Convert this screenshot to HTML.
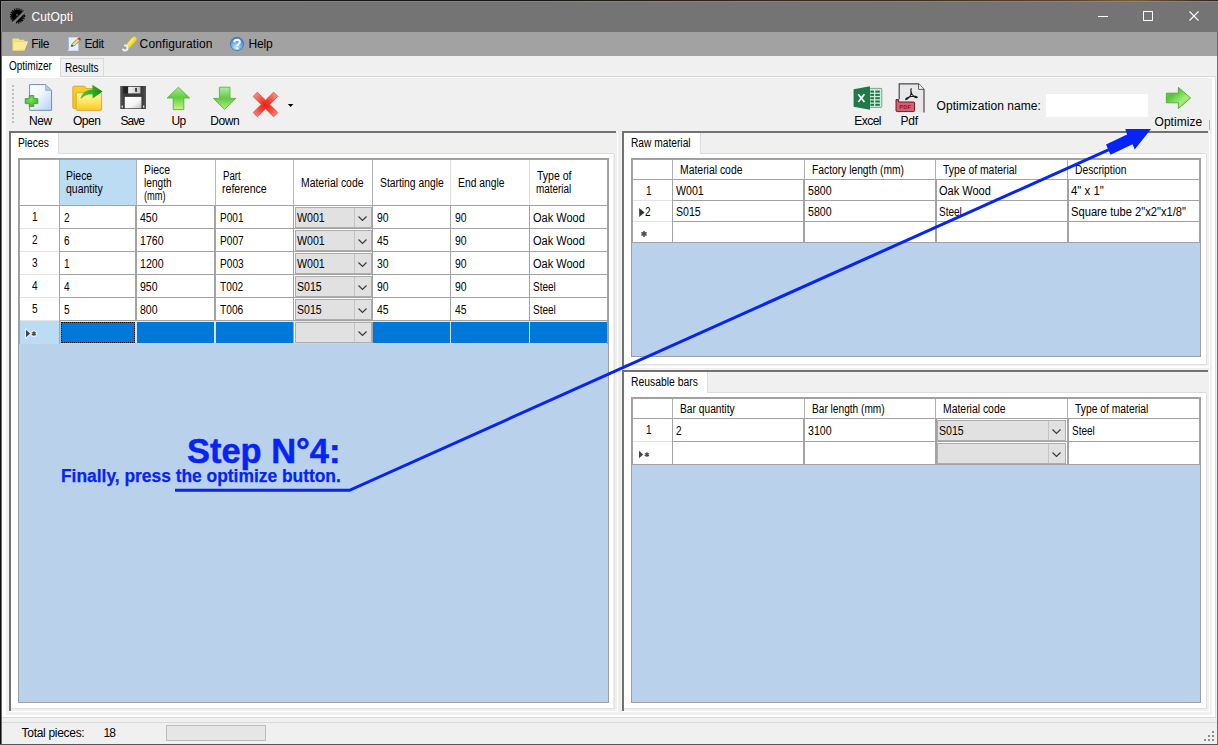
<!DOCTYPE html>
<html><head><meta charset="utf-8"><title>CutOpti</title><style>
html,body{margin:0;padding:0;}
body{width:1218px;height:745px;overflow:hidden;position:relative;background:#f0f0f0;font-family:"Liberation Sans",sans-serif;}
body div{position:absolute;}
.t{white-space:nowrap;color:#000;}
.g{font-size:12px;line-height:13px;}
.u{font-size:12px;line-height:14px;}
svg{position:absolute;overflow:visible;}
</style></head><body>
<div style="left:0px;top:0px;width:1218px;height:745px;background:#f0f0f0;"></div>
<div style="left:0px;top:0px;width:1218px;height:32px;background:#747474;"></div>
<div style="left:1px;top:1px;width:1217px;height:1px;background:#858585;"></div>
<div style="left:1px;top:1px;width:1px;height:31px;background:#858585;"></div>
<div style="left:0px;top:32px;width:1218px;height:24px;background:#a2a2a2;"></div>
<div style="left:0px;top:0px;width:1218px;height:1px;background:linear-gradient(90deg,#12110e 0%,#171511 45%,#2e2519 60%,#3c2e1e 75%,#5e4429 88%,#7a5a36 93%,#4a3a28 97%,#2a241c 100%);"></div>
<div style="left:0px;top:0px;width:1px;height:745px;background:#0c0c0c;"></div>
<div style="left:1px;top:32px;width:1px;height:713px;background:#6c6c6c;"></div>
<div style="left:1217px;top:32px;width:1px;height:713px;background:#6a6a6a;"></div>
<div style="left:0px;top:744px;width:1218px;height:1px;background:#555;"></div>
<div class="t u" style="left:31.5px;top:10px;letter-spacing:0.116px;color:#fff;">CutOpti</div>
<svg width="110" height="14" style="left:1095px;top:9px"><path d="M3 7.5H13" stroke="#fff" stroke-width="1" fill="none"/><rect x="48.5" y="2.5" width="9" height="9" stroke="#fff" stroke-width="1" fill="none"/><path d="M94.5 2.5L103.5 11.5M103.5 2.5L94.5 11.5" stroke="#fff" stroke-width="1.1" fill="none"/></svg>
<svg width="18" height="18" style="left:9px;top:7px" viewBox="0 0 18 18"><circle cx="8.5" cy="8.8" r="6.4" fill="#000"/><circle cx="8.5" cy="8.8" r="7" fill="none" stroke="#000" stroke-width="1.3" stroke-dasharray="1.25 1.0"/><path d="M3.4 15.2L14.9 3.9L16.4 5.5L5 16.9Z" fill="#7e7e7e"/><path d="M3 14.7L14.6 3.4" stroke="#2a2a2a" stroke-width="0.9"/><circle cx="8" cy="8" r="0.9" fill="#555"/></svg>
<div class="t u" style="left:31.2px;top:37px;letter-spacing:-0.336px;">File</div>
<div class="t u" style="left:84.4px;top:37px;letter-spacing:-0.322px;">Edit</div>
<div class="t u" style="left:139.6px;top:37px;letter-spacing:0.124px;">Configuration</div>
<div class="t u" style="left:248.6px;top:37px;letter-spacing:-0.172px;">Help</div>
<div style="left:2px;top:56px;width:58px;height:22px;background:#fff;"></div>
<div style="left:60px;top:58px;width:44px;height:19px;background:#f0f0f0;border:1px solid #d9d9d9;box-sizing:border-box;"></div>
<div style="left:60px;top:76px;width:1156px;height:1px;background:#d9d9d9;"></div>
<div style="left:2px;top:77px;width:1213px;height:1.3px;background:#fff;"></div>
<div style="left:2px;top:77px;width:4px;height:640px;background:#fff;"></div>
<div style="left:1212px;top:77px;width:3px;height:640px;background:#fff;"></div>
<div style="left:1215px;top:77px;width:1px;height:641px;background:#dcdcdc;"></div>
<div style="left:2px;top:715px;width:1213px;height:2px;background:#fff;"></div>
<div style="left:2px;top:717px;width:1214px;height:1px;background:#d9d9d9;"></div>
<div style="left:2px;top:722px;width:1215px;height:1px;background:#d9d9d9;"></div>
<div class="t g" style="left:9.1px;top:60px;transform:scaleX(0.8336);transform-origin:0 0;">Optimizer</div>
<div class="t g" style="left:64.7px;top:62px;transform:scaleX(0.8372);transform-origin:0 0;">Results</div>
<div style="left:12px;top:85px;width:2px;height:2px;background:#bdbdbd;"></div>
<div style="left:12px;top:89px;width:2px;height:2px;background:#bdbdbd;"></div>
<div style="left:12px;top:93px;width:2px;height:2px;background:#bdbdbd;"></div>
<div style="left:12px;top:97px;width:2px;height:2px;background:#bdbdbd;"></div>
<div style="left:12px;top:101px;width:2px;height:2px;background:#bdbdbd;"></div>
<div style="left:12px;top:105px;width:2px;height:2px;background:#bdbdbd;"></div>
<div style="left:12px;top:109px;width:2px;height:2px;background:#bdbdbd;"></div>
<div style="left:12px;top:113px;width:2px;height:2px;background:#bdbdbd;"></div>
<div style="left:12px;top:117px;width:2px;height:2px;background:#bdbdbd;"></div>
<div style="left:12px;top:121px;width:2px;height:2px;background:#bdbdbd;"></div>
<div class="t u" style="left:28.9px;top:114px;letter-spacing:-0.339px;">New</div>
<div class="t u" style="left:72.9px;top:114px;letter-spacing:-0.440px;">Open</div>
<div class="t u" style="left:120.5px;top:114px;letter-spacing:-1.015px;">Save</div>
<div class="t u" style="left:171.4px;top:114px;letter-spacing:-0.672px;">Up</div>
<div class="t u" style="left:210.2px;top:114px;letter-spacing:-0.372px;">Down</div>
<div class="t u" style="left:854.2px;top:114px;letter-spacing:-0.509px;">Excel</div>
<div class="t u" style="left:900.5px;top:114px;letter-spacing:-0.272px;">Pdf</div>
<div class="t u" style="left:936.6px;top:99px;letter-spacing:0.056px;">Optimization name:</div>
<div class="t u" style="left:1154.5px;top:115px;letter-spacing:0.045px;">Optimize</div>
<div style="left:1046px;top:94px;width:102px;height:23px;background:#fff;"></div>
<div style="left:1209px;top:120px;width:1px;height:10px;background:#b4b4b4;"></div>
<svg width="1218" height="130" style="left:0;top:0" viewBox="0 0 1218 130">
<defs>
<linearGradient id="gPage" x1="0" y1="0" x2="1" y2="1"><stop offset="0" stop-color="#ffffff"/><stop offset="0.45" stop-color="#eef5fd"/><stop offset="1" stop-color="#b4d0f2"/></linearGradient>
<radialGradient id="gPlus" cx="0.45" cy="0.4" r="0.7"><stop offset="0" stop-color="#7ee05a"/><stop offset="1" stop-color="#3aa826"/></radialGradient>
<linearGradient id="gFoldB" x1="0" y1="0" x2="0" y2="1"><stop offset="0" stop-color="#f9cf2c"/><stop offset="1" stop-color="#f6c21c"/></linearGradient>
<linearGradient id="gFoldF" x1="0" y1="0" x2="0" y2="1"><stop offset="0" stop-color="#fff6a8"/><stop offset="0.55" stop-color="#fde45c"/><stop offset="1" stop-color="#fbc926"/></linearGradient>
<linearGradient id="gGArr" x1="0" y1="0" x2="1" y2="0"><stop offset="0" stop-color="#55c838"/><stop offset="0.6" stop-color="#2fa81e"/><stop offset="1" stop-color="#178610"/></linearGradient>
<linearGradient id="gDisk" x1="0" y1="0" x2="1" y2="0"><stop offset="0" stop-color="#5a5a5a"/><stop offset="0.15" stop-color="#3c3c3c"/><stop offset="0.85" stop-color="#3a3a3a"/><stop offset="1" stop-color="#555"/></linearGradient>
<linearGradient id="gLabel" x1="0" y1="0" x2="1" y2="1"><stop offset="0" stop-color="#ffffff"/><stop offset="0.6" stop-color="#f4f4f4"/><stop offset="1" stop-color="#bdbdbd"/></linearGradient>
<linearGradient id="gShut" x1="0" y1="0" x2="1" y2="0"><stop offset="0" stop-color="#f4f4f4"/><stop offset="1" stop-color="#c4c4c4"/></linearGradient>
<linearGradient id="gUp" x1="0" y1="0" x2="0" y2="1"><stop offset="0" stop-color="#a4ec8c"/><stop offset="0.45" stop-color="#62cc42"/><stop offset="1" stop-color="#c6f77c"/></linearGradient>
<linearGradient id="gDn" x1="0" y1="0" x2="0" y2="1"><stop offset="0" stop-color="#b0eea0"/><stop offset="0.5" stop-color="#62c848"/><stop offset="1" stop-color="#b4f070"/></linearGradient>
<linearGradient id="gRt" x1="0" y1="0" x2="1" y2="1"><stop offset="0" stop-color="#6ed24e"/><stop offset="0.3" stop-color="#56c63a"/><stop offset="0.65" stop-color="#a8ec78"/><stop offset="1" stop-color="#6ccc48"/></linearGradient>
<radialGradient id="gX" cx="0.5" cy="0.55" r="0.6"><stop offset="0" stop-color="#ec1a10"/><stop offset="0.45" stop-color="#f2463a"/><stop offset="1" stop-color="#f98a7c"/></radialGradient>
<radialGradient id="gHelp" cx="0.45" cy="0.75" r="0.8"><stop offset="0" stop-color="#c8ecff"/><stop offset="0.5" stop-color="#6aa8e6"/><stop offset="1" stop-color="#2f6cc4"/></radialGradient>
</defs>

<!-- menu: folder -->
<g>
<path d="M12.6 38.6H18.5L19.6 39.8H24.4V41.2H27.9L24.4 50.3L12.9 51Z" fill="#f4e27e"/>
<path d="M14.7 41.4H28L24.3 50.4L12.9 50.9Z" fill="#f8ec9c"/>
<path d="M13 50.6L24.3 50.1" stroke="#e6cd5a" stroke-width="0.9" fill="none"/><path d="M14.9 41.6H27.6" stroke="#e9d46a" stroke-width="0.8" fill="none"/><path d="M12.8 38.8V50.6" stroke="#ecd870" stroke-width="0.7" fill="none"/>
</g>
<!-- menu: edit -->
<g>
<rect x="67.6" y="37.4" width="11" height="13.4" fill="#e9f1fc"/>
<rect x="67.4" y="37.4" width="1.2" height="13.4" fill="#6f96c8"/>
<path d="M67.6 50.4H78.6" stroke="#c9dbf3" stroke-width="0.9"/>
<path d="M78.6 37.4V50.8" stroke="#9db5d6" stroke-width="0.8" opacity="0.7"/>
<path d="M71.2 46.6L72 43.8L78.2 38.4L80.2 40.4L74 46Z" fill="#f2dc82" stroke="#6b5a3a" stroke-width="0.6"/>
<path d="M71.2 46.6L72 44.6L73.4 46Z" fill="#3a3a3a"/>
<path d="M77.6 38.8L79 37.4L81 39.2L79.8 40.6Z" fill="#c4283a"/>
</g>
<!-- menu: wrench/screwdriver -->
<g>
<path d="M128.6 45.4L134.2 39" stroke="#e9cb1c" stroke-width="5" stroke-linecap="round" fill="none"/>
<path d="M128.6 45.4L134.2 39" stroke="#f3dc2e" stroke-width="4" stroke-linecap="round" fill="none"/>
<path d="M128.6 44L133.2 38.8" stroke="#fbf07c" stroke-width="1.3" stroke-linecap="round" fill="none"/>
<path d="M124.15 45.65A2.5 2.5 0 1 1 122.65 48.86" fill="none" stroke="#f4f4f4" stroke-width="1.8"/>
<path d="M126.6 46.4L128 45" stroke="#f0f0f0" stroke-width="1.6"/>
</g>
<!-- menu: help -->
<g>
<circle cx="237" cy="43.9" r="6.7" fill="url(#gHelp)" stroke="#3f78c8" stroke-width="0.9"/>
<path d="M234.3 42.2Q234.4 39.8 237 39.8Q239.8 39.9 239.8 42Q239.8 43.3 238.4 44.2Q237.3 44.9 237.3 46" fill="none" stroke="#fff" stroke-width="1.9"/>
<circle cx="237.2" cy="48.3" r="1.1" fill="#fff"/>
</g>

<!-- New -->
<g>
<path d="M29.6 84.6H45.6L51.6 90.4V110.3H29.6Z" fill="url(#gPage)" stroke="#6f8db3" stroke-width="1"/>
<path d="M45.6 84.6V90.4H51.6Z" fill="#a9c8ee" stroke="#86a6d0" stroke-width="0.7"/>
<path d="M29.2 95.4H33.8V98.6H37.8V103.6H33.8V106.6H29.2V103.6H25.2V98.6H29.2Z" fill="url(#gPlus)" stroke="#3f9c2a" stroke-width="0.8" stroke-linejoin="round"/>
</g>
<!-- Open -->
<g>
<path d="M72.8 87.4Q72.8 86.2 74 86.2H84Q85.2 86.2 85.6 87.4L86 88.6H98V107.4L76 108.6H74Q72.8 108.6 72.8 107.4Z" fill="url(#gFoldB)" stroke="#cf9c1e" stroke-width="0.8"/>
<path d="M76.2 94Q76.2 92.8 77.4 92.8H100.4Q101.6 92.8 101.6 94V109Q101.6 110.4 100.2 110.4H77.8Q76.2 110.4 76.2 109Z" fill="url(#gFoldF)" stroke="#d9a422" stroke-width="0.9"/>
<path d="M80.4 98.6Q82.6 89.8 92.4 89.4V84.8L102.6 91.4L92.6 98.6V94.4Q85.4 94 81.6 98.6Z" fill="url(#gGArr)"/>
</g>
<!-- Save -->
<g>
<rect x="120.2" y="86" width="25.8" height="23" fill="url(#gDisk)"/>
<rect x="123.3" y="86.8" width="4.9" height="6.6" fill="#232323"/>
<rect x="128.2" y="86.8" width="12.2" height="6.6" fill="url(#gShut)"/>
<rect x="135.1" y="88" width="1.9" height="3.8" fill="#3a3a3a"/>
<rect x="124.8" y="96.9" width="16.6" height="11.4" fill="url(#gLabel)"/>
<rect x="121.6" y="105.6" width="1.3" height="2" fill="#e8e8e8"/><rect x="143" y="105.6" width="1.3" height="2" fill="#e8e8e8"/>
</g>
<!-- Up -->
<path d="M178.4 87.2L189.6 98H183.8V109.6H173.2V98H167.2Z" fill="url(#gUp)" stroke="#55b436" stroke-width="0.9" stroke-linejoin="round"/>
<!-- Down -->
<path d="M219.4 87.2H230V98.4H235.8L224.6 109.4L213.4 98.4H219.4Z" fill="url(#gDn)" stroke="#5cb440" stroke-width="0.9" stroke-linejoin="round"/>
<!-- Delete X -->
<path d="M257.4 92.2L265.5 100.2L273.6 92.2L277.8 96.4L269.8 104.5L277.8 112.6L273.6 116.8L265.5 108.8L257.4 116.8L253.2 112.6L261.2 104.5L253.2 96.4Z" fill="url(#gX)" stroke="#d4483a" stroke-width="0.8" stroke-linejoin="round"/>
<path d="M287.8 104H293.4L290.6 107Z" fill="#000"/>

<!-- Excel -->
<g>
<rect x="869.4" y="88.4" width="12.4" height="19" rx="0.8" fill="#cdeeda" stroke="#6e9c80" stroke-width="0.9"/>
<g fill="#1f7445">
<rect x="870.4" y="90.6" width="3.6" height="2"/><rect x="875.3" y="90.6" width="4.5" height="2"/>
<rect x="870.4" y="93.9" width="3.6" height="2"/><rect x="875.3" y="93.9" width="4.5" height="2"/>
<rect x="870.4" y="97.2" width="3.6" height="2"/><rect x="875.3" y="97.2" width="4.5" height="2"/>
<rect x="870.4" y="100.5" width="3.6" height="2"/><rect x="875.3" y="100.5" width="4.5" height="2"/>
<rect x="870.4" y="103.8" width="3.6" height="2"/><rect x="875.3" y="103.8" width="4.5" height="2"/>
</g>
<path d="M853.6 89.2L870 86.2V109.8L853.6 106.8Z" fill="#1f7a48"/>
<path d="M858.3 94.2L864.4 102M864.4 94.2L858.3 102" stroke="#fff" stroke-width="1.7" fill="none"/>
</g>
<!-- Pdf -->
<g>
<path d="M899.2 83.8H918.6L924 89.4V112.6H899.2Z" fill="#e9e7ea"/>
<path d="M899.2 99.2V83.8H918.6L924 89.4V112.6" fill="none" stroke="#4a4a4a" stroke-width="1.2"/>
<path d="M918.6 83.8V89.4H924" fill="#f4f4f4" stroke="#4a4a4a" stroke-width="0.9"/>
<path d="M911.4 88.4Q910.4 89.6 911 92Q911.6 94.6 909 97.4Q907.2 99.4 905.8 99.6Q905.4 98.2 908.4 97.2Q912 96 915.4 96.4Q917.6 96.8 917.2 97.6Q916 98 913.6 96.2Q911.2 94 911 91.4Q910.8 88.8 911.4 88.4Z" fill="none" stroke="#1a1a1a" stroke-width="1.1"/>
<path d="M896 99.6H898.6V102H913.6Q914.6 102 914.6 103V110.4Q914.6 111.6 913.4 111.6H897.2Q896 111.6 896 110.4Z" fill="#d9606e" stroke="#571018" stroke-width="0.9"/>
<text x="905.3" y="109.2" font-family="Liberation Sans, sans-serif" font-weight="bold" font-size="5.6" fill="#8a1626" text-anchor="middle" letter-spacing="0.3">PDF</text>
</g>
<!-- Optimize arrow -->
<path d="M1166.4 93.2H1178.4V87.4L1190.6 98L1178.4 108.6V102.8H1166.4Z" fill="url(#gRt)" stroke="#4ea634" stroke-width="0.9" stroke-linejoin="round"/>
</svg>

<div style="left:9.2px;top:131px;width:606.8px;height:2px;background:#727272;"></div>
<div style="left:9.2px;top:131px;width:2px;height:579.5px;background:#727272;"></div>
<div style="left:616.8px;top:131px;width:1.2px;height:581px;background:#fff;"></div>
<div style="left:9.2px;top:710.8px;width:608.8px;height:1.2px;background:#fff;"></div>
<div style="left:11.2px;top:133px;width:46.8px;height:22px;background:#fff;"></div>
<div style="left:58.0px;top:153px;width:555.5px;height:1px;background:#dcdcdc;"></div>
<div style="left:58.0px;top:133px;width:1px;height:21px;background:#dcdcdc;"></div>
<div style="left:11.2px;top:154px;width:602.3px;height:554px;background:#fff;"></div>
<div style="left:613.5px;top:154px;width:1px;height:555px;background:#e0e0e0;"></div>
<div style="left:11.2px;top:708px;width:603.3px;height:1px;background:#e0e0e0;"></div>
<div class="t g" style="left:18.1px;top:137px;transform:scaleX(0.8548);transform-origin:0 0;">Pieces</div>
<div style="left:622px;top:131px;width:586px;height:2px;background:#727272;"></div>
<div style="left:622px;top:131px;width:2px;height:235.1px;background:#727272;"></div>
<div style="left:1208.8px;top:131px;width:1.2px;height:236.6px;background:#fff;"></div>
<div style="left:622px;top:366.40000000000003px;width:588px;height:1.2px;background:#fff;"></div>
<div style="left:624px;top:133px;width:76.4px;height:22px;background:#fff;"></div>
<div style="left:700.4px;top:153px;width:505.1px;height:1px;background:#dcdcdc;"></div>
<div style="left:700.4px;top:133px;width:1px;height:21px;background:#dcdcdc;"></div>
<div style="left:624px;top:154px;width:581.5px;height:209.6px;background:#fff;"></div>
<div style="left:1205.5px;top:154px;width:1px;height:210.6px;background:#e0e0e0;"></div>
<div style="left:624px;top:363.6px;width:582.5px;height:1px;background:#e0e0e0;"></div>
<div class="t g" style="left:630.9px;top:137px;transform:scaleX(0.8510);transform-origin:0 0;">Raw material</div>
<div style="left:622px;top:370px;width:586px;height:2px;background:#727272;"></div>
<div style="left:622px;top:370px;width:2px;height:340.5px;background:#727272;"></div>
<div style="left:1208.8px;top:370px;width:1.2px;height:342px;background:#fff;"></div>
<div style="left:622px;top:710.8px;width:588px;height:1.2px;background:#fff;"></div>
<div style="left:624px;top:372px;width:83px;height:22px;background:#fff;"></div>
<div style="left:707px;top:392px;width:498.5px;height:1px;background:#dcdcdc;"></div>
<div style="left:707px;top:372px;width:1px;height:21px;background:#dcdcdc;"></div>
<div style="left:624px;top:393px;width:581.5px;height:315px;background:#fff;"></div>
<div style="left:1205.5px;top:393px;width:1px;height:316px;background:#e0e0e0;"></div>
<div style="left:624px;top:708px;width:582.5px;height:1px;background:#e0e0e0;"></div>
<div class="t g" style="left:630.9px;top:376px;transform:scaleX(0.8644);transform-origin:0 0;">Reusable bars</div>
<div style="left:18px;top:158px;width:591px;height:545px;background:#b9d1ea;"></div>
<div style="left:20px;top:160px;width:587px;height:184px;background:#fff;"></div>
<div style="left:59px;top:160px;width:1px;height:46px;background:#b0b0b0;"></div>
<div style="left:136px;top:160px;width:1px;height:46px;background:#b0b0b0;"></div>
<div style="left:215px;top:160px;width:1px;height:46px;background:#b8b8b8;"></div>
<div style="left:293px;top:160px;width:1px;height:46px;background:#b8b8b8;"></div>
<div style="left:372px;top:160px;width:1px;height:46px;background:#b0b0b0;"></div>
<div style="left:450px;top:160px;width:1px;height:46px;background:#dedede;"></div>
<div style="left:529px;top:160px;width:1px;height:46px;background:#dedede;"></div>
<div style="left:59px;top:206px;width:1px;height:138px;background:#a3a3a3;"></div>
<div style="left:135px;top:206px;width:2px;height:138px;background:#a3a3a3;"></div>
<div style="left:214px;top:206px;width:2px;height:138px;background:#a3a3a3;"></div>
<div style="left:293px;top:206px;width:1px;height:138px;background:#a3a3a3;"></div>
<div style="left:372px;top:206px;width:1px;height:138px;background:#a3a3a3;"></div>
<div style="left:450px;top:206px;width:1px;height:138px;background:#a3a3a3;"></div>
<div style="left:529px;top:206px;width:1px;height:138px;background:#a3a3a3;"></div>
<div style="left:59px;top:205px;width:548px;height:1px;background:#a3a3a3;"></div>
<div style="left:20px;top:205px;width:39px;height:1px;background:#a3a3a3;"></div>
<div style="left:59px;top:228px;width:548px;height:1px;background:#a3a3a3;"></div>
<div style="left:20px;top:228px;width:39px;height:1px;background:#e4e4e4;"></div>
<div style="left:59px;top:251px;width:548px;height:1px;background:#a3a3a3;"></div>
<div style="left:20px;top:251px;width:39px;height:1px;background:#e4e4e4;"></div>
<div style="left:59px;top:274px;width:548px;height:1px;background:#a3a3a3;"></div>
<div style="left:20px;top:274px;width:39px;height:1px;background:#e4e4e4;"></div>
<div style="left:59px;top:297px;width:548px;height:1px;background:#a3a3a3;"></div>
<div style="left:20px;top:297px;width:39px;height:1px;background:#e4e4e4;"></div>
<div style="left:59px;top:320px;width:548px;height:1px;background:#a3a3a3;"></div>
<div style="left:20px;top:320px;width:39px;height:1px;background:#e4e4e4;"></div>
<div style="left:59px;top:343px;width:548px;height:1px;background:#a3a3a3;"></div>
<div style="left:20px;top:343px;width:39px;height:1px;background:#a3a3a3;"></div>
<div style="left:18px;top:158px;width:591px;height:1px;background:#9c9fa3;"></div>
<div style="left:18px;top:158px;width:1px;height:545px;background:#9c9fa3;"></div>
<div style="left:608px;top:158px;width:1px;height:545px;background:#9c9fa3;"></div>
<div style="left:18px;top:702px;width:591px;height:1px;background:#9c9fa3;"></div>
<div style="left:19px;top:159px;width:589px;height:1px;background:#a3a3a3;"></div>
<div style="left:19px;top:159px;width:1px;height:185px;background:#a3a3a3;"></div>
<div style="left:607px;top:159px;width:1px;height:185px;background:#a3a3a3;"></div>
<div style="left:60px;top:160px;width:76px;height:45px;background:#bcdcf4;"></div>
<div style="left:60px;top:321px;width:75px;height:22px;background:#0078d7;"></div>
<div style="left:137px;top:321px;width:77px;height:22px;background:#0078d7;"></div>
<div style="left:216px;top:321px;width:77px;height:22px;background:#0078d7;"></div>
<div style="left:373px;top:321px;width:77px;height:22px;background:#0078d7;"></div>
<div style="left:451px;top:321px;width:78px;height:22px;background:#0078d7;"></div>
<div style="left:530px;top:321px;width:77px;height:22px;background:#0078d7;"></div>
<div style="left:135px;top:321px;width:2px;height:22px;background:#cfe3f4;"></div>
<div style="left:214px;top:321px;width:2px;height:22px;background:#cfe3f4;"></div>
<div style="left:450px;top:321px;width:1.4px;height:22px;background:#cfe3f4;"></div>
<div style="left:529px;top:321px;width:1.4px;height:22px;background:#cfe3f4;"></div>
<div style="left:60px;top:343px;width:547px;height:1px;background:#c3d5e8;"></div>
<div style="left:60px;top:321px;width:547px;height:1px;background:#dbe9f6;"></div>
<div style="left:60px;top:321px;width:1px;height:22px;background:#9fc6ea;"></div>
<div style="left:61px;top:322px;width:74px;height:21px;background:transparent;border:1px dotted #0a0a0a;box-sizing:border-box;"></div>
<div class="t g" style="left:66.4px;top:170px;transform:scaleX(0.8724);transform-origin:0 0;">Piece</div>
<div class="t g" style="left:65.9px;top:183px;transform:scaleX(0.8732);transform-origin:0 0;">quantity</div>
<div class="t g" style="left:143.5px;top:164px;transform:scaleX(0.8658);transform-origin:0 0;">Piece</div>
<div class="t g" style="left:143.5px;top:177px;transform:scaleX(0.8440);transform-origin:0 0;">length</div>
<div class="t g" style="left:143.5px;top:190px;transform:scaleX(0.7719);transform-origin:0 0;">(mm)</div>
<div class="t g" style="left:222.5px;top:170px;transform:scaleX(0.8040);transform-origin:0 0;">Part</div>
<div class="t g" style="left:221.7px;top:183px;transform:scaleX(0.8816);transform-origin:0 0;">reference</div>
<div class="t g" style="left:300.9px;top:177px;transform:scaleX(0.8675);transform-origin:0 0;">Material code</div>
<div class="t g" style="left:379.7px;top:177px;transform:scaleX(0.8601);transform-origin:0 0;">Starting angle</div>
<div class="t g" style="left:457.7px;top:177px;transform:scaleX(0.8604);transform-origin:0 0;">End angle</div>
<div class="t g" style="left:536.7px;top:170px;transform:scaleX(0.8765);transform-origin:0 0;">Type of</div>
<div class="t g" style="left:536.0px;top:183px;transform:scaleX(0.8246);transform-origin:0 0;">material</div>
<div class="t g" style="left:32.4px;top:211px;transform:scaleX(0.8374);transform-origin:0 0;">1</div>
<div class="t g" style="left:63.5px;top:212px;transform:scaleX(0.8374);transform-origin:0 0;">2</div>
<div class="t g" style="left:140.3px;top:212px;transform:scaleX(0.8786);transform-origin:0 0;">450</div>
<div class="t g" style="left:219.7px;top:212px;transform:scaleX(0.8384);transform-origin:0 0;">P001</div>
<div class="t g" style="left:376.8px;top:212px;transform:scaleX(0.8683);transform-origin:0 0;">90</div>
<div class="t g" style="left:454.7px;top:212px;transform:scaleX(0.8683);transform-origin:0 0;">90</div>
<div class="t g" style="left:533.0px;top:212px;transform:scaleX(0.9171);transform-origin:0 0;">Oak Wood</div>
<div style="left:295px;top:207px;width:77px;height:21px;background:#e1e1e1;border:1px solid #adadad;box-sizing:border-box;"></div>
<div style="left:354px;top:208px;width:1px;height:19px;background:#c4c4c4;"></div>
<svg width="10" height="6" style="left:358px;top:215.5px"><path d="M0.5 0.5L4.5 4.5L8.5 0.5" fill="none" stroke="#3a3a3a" stroke-width="1.2"/></svg>
<div class="t g" style="left:297.4px;top:212px;transform:scaleX(0.8865);transform-origin:0 0;">W001</div>
<div class="t g" style="left:32.4px;top:234px;transform:scaleX(0.8374);transform-origin:0 0;">2</div>
<div class="t g" style="left:63.5px;top:235px;transform:scaleX(0.8374);transform-origin:0 0;">6</div>
<div class="t g" style="left:140.3px;top:235px;transform:scaleX(0.8838);transform-origin:0 0;">1760</div>
<div class="t g" style="left:219.7px;top:235px;transform:scaleX(0.8455);transform-origin:0 0;">P007</div>
<div class="t g" style="left:376.8px;top:235px;transform:scaleX(0.8683);transform-origin:0 0;">45</div>
<div class="t g" style="left:454.7px;top:235px;transform:scaleX(0.8683);transform-origin:0 0;">90</div>
<div class="t g" style="left:533.0px;top:235px;transform:scaleX(0.9171);transform-origin:0 0;">Oak Wood</div>
<div style="left:295px;top:230px;width:77px;height:21px;background:#e1e1e1;border:1px solid #adadad;box-sizing:border-box;"></div>
<div style="left:354px;top:231px;width:1px;height:19px;background:#c4c4c4;"></div>
<svg width="10" height="6" style="left:358px;top:238.5px"><path d="M0.5 0.5L4.5 4.5L8.5 0.5" fill="none" stroke="#3a3a3a" stroke-width="1.2"/></svg>
<div class="t g" style="left:297.4px;top:235px;transform:scaleX(0.8865);transform-origin:0 0;">W001</div>
<div class="t g" style="left:32.4px;top:257px;transform:scaleX(0.8374);transform-origin:0 0;">3</div>
<div class="t g" style="left:63.5px;top:258px;transform:scaleX(0.8374);transform-origin:0 0;">1</div>
<div class="t g" style="left:140.3px;top:258px;transform:scaleX(0.8838);transform-origin:0 0;">1200</div>
<div class="t g" style="left:219.7px;top:258px;transform:scaleX(0.8455);transform-origin:0 0;">P003</div>
<div class="t g" style="left:376.8px;top:258px;transform:scaleX(0.8683);transform-origin:0 0;">30</div>
<div class="t g" style="left:454.7px;top:258px;transform:scaleX(0.8683);transform-origin:0 0;">90</div>
<div class="t g" style="left:533.0px;top:258px;transform:scaleX(0.9171);transform-origin:0 0;">Oak Wood</div>
<div style="left:295px;top:253px;width:77px;height:21px;background:#e1e1e1;border:1px solid #adadad;box-sizing:border-box;"></div>
<div style="left:354px;top:254px;width:1px;height:19px;background:#c4c4c4;"></div>
<svg width="10" height="6" style="left:358px;top:261.5px"><path d="M0.5 0.5L4.5 4.5L8.5 0.5" fill="none" stroke="#3a3a3a" stroke-width="1.2"/></svg>
<div class="t g" style="left:297.4px;top:258px;transform:scaleX(0.8865);transform-origin:0 0;">W001</div>
<div class="t g" style="left:32.4px;top:280px;transform:scaleX(0.8374);transform-origin:0 0;">4</div>
<div class="t g" style="left:63.5px;top:281px;transform:scaleX(0.8374);transform-origin:0 0;">4</div>
<div class="t g" style="left:140.3px;top:281px;transform:scaleX(0.8786);transform-origin:0 0;">950</div>
<div class="t g" style="left:219.7px;top:281px;transform:scaleX(0.8480);transform-origin:0 0;">T002</div>
<div class="t g" style="left:376.8px;top:281px;transform:scaleX(0.8683);transform-origin:0 0;">90</div>
<div class="t g" style="left:454.7px;top:281px;transform:scaleX(0.8683);transform-origin:0 0;">90</div>
<div class="t g" style="left:533.0px;top:281px;transform:scaleX(0.8334);transform-origin:0 0;">Steel</div>
<div style="left:295px;top:276px;width:77px;height:21px;background:#e1e1e1;border:1px solid #adadad;box-sizing:border-box;"></div>
<div style="left:354px;top:277px;width:1px;height:19px;background:#c4c4c4;"></div>
<svg width="10" height="6" style="left:358px;top:284.5px"><path d="M0.5 0.5L4.5 4.5L8.5 0.5" fill="none" stroke="#3a3a3a" stroke-width="1.2"/></svg>
<div class="t g" style="left:297.4px;top:281px;transform:scaleX(0.8812);transform-origin:0 0;">S015</div>
<div class="t g" style="left:32.4px;top:303px;transform:scaleX(0.8374);transform-origin:0 0;">5</div>
<div class="t g" style="left:63.5px;top:304px;transform:scaleX(0.8374);transform-origin:0 0;">5</div>
<div class="t g" style="left:140.3px;top:304px;transform:scaleX(0.8786);transform-origin:0 0;">800</div>
<div class="t g" style="left:219.7px;top:304px;transform:scaleX(0.8480);transform-origin:0 0;">T006</div>
<div class="t g" style="left:376.8px;top:304px;transform:scaleX(0.8683);transform-origin:0 0;">45</div>
<div class="t g" style="left:454.7px;top:304px;transform:scaleX(0.8683);transform-origin:0 0;">45</div>
<div class="t g" style="left:533.0px;top:304px;transform:scaleX(0.8334);transform-origin:0 0;">Steel</div>
<div style="left:295px;top:299px;width:77px;height:21px;background:#e1e1e1;border:1px solid #adadad;box-sizing:border-box;"></div>
<div style="left:354px;top:300px;width:1px;height:19px;background:#c4c4c4;"></div>
<svg width="10" height="6" style="left:358px;top:307.5px"><path d="M0.5 0.5L4.5 4.5L8.5 0.5" fill="none" stroke="#3a3a3a" stroke-width="1.2"/></svg>
<div class="t g" style="left:297.4px;top:304px;transform:scaleX(0.8812);transform-origin:0 0;">S015</div>
<div style="left:295px;top:322px;width:77px;height:21px;background:#e1e1e1;border:1px solid #adadad;box-sizing:border-box;"></div>
<div style="left:354px;top:323px;width:1px;height:19px;background:#c4c4c4;"></div>
<svg width="10" height="6" style="left:358px;top:330.5px"><path d="M0.5 0.5L4.5 4.5L8.5 0.5" fill="none" stroke="#3a3a3a" stroke-width="1.2"/></svg>
<div style="left:20px;top:321px;width:39px;height:23px;background:#bcdcf4;"></div>
<svg width="14" height="10" style="left:24.7px;top:328.8px"><path d="M1 0.6L5.4 4.5L1 8.4Z" fill="#fff" stroke="#fff" stroke-width="1.6" opacity="0.75"/><circle cx="8.9" cy="4.7" r="3.3" fill="#fff" opacity="0.7"/><path d="M1 0.8L5.2 4.5L1 8.2Z" fill="#444"/><path d="M8.9 2.3V7.1M6.8 3.5L11 5.9M11 3.5L6.8 5.9" stroke="#4a4a4a" stroke-width="1.3"/></svg>
<div style="left:631px;top:158px;width:570px;height:199px;background:#b9d1ea;"></div>
<div style="left:633px;top:160px;width:566px;height:83px;background:#fff;"></div>
<div style="left:672px;top:160px;width:1px;height:20px;background:#b0b0b0;"></div>
<div style="left:804px;top:160px;width:1px;height:20px;background:#b0b0b0;"></div>
<div style="left:935px;top:160px;width:1px;height:20px;background:#b0b0b0;"></div>
<div style="left:1067px;top:160px;width:1px;height:20px;background:#b0b0b0;"></div>
<div style="left:672px;top:180px;width:1px;height:63px;background:#a3a3a3;"></div>
<div style="left:803px;top:180px;width:2px;height:63px;background:#a3a3a3;"></div>
<div style="left:934.5px;top:180px;width:2px;height:63px;background:#a3a3a3;"></div>
<div style="left:1066.5px;top:180px;width:2px;height:63px;background:#a3a3a3;"></div>
<div style="left:672px;top:179px;width:527px;height:1px;background:#a3a3a3;"></div>
<div style="left:633px;top:179px;width:39px;height:1px;background:#a3a3a3;"></div>
<div style="left:672px;top:200px;width:527px;height:1px;background:#a3a3a3;"></div>
<div style="left:633px;top:200px;width:39px;height:1px;background:#e4e4e4;"></div>
<div style="left:672px;top:221px;width:527px;height:1px;background:#a3a3a3;"></div>
<div style="left:633px;top:221px;width:39px;height:1px;background:#e4e4e4;"></div>
<div style="left:672px;top:242px;width:527px;height:1px;background:#a3a3a3;"></div>
<div style="left:633px;top:242px;width:39px;height:1px;background:#a3a3a3;"></div>
<div style="left:631px;top:158px;width:570px;height:1px;background:#9c9fa3;"></div>
<div style="left:631px;top:158px;width:1px;height:199px;background:#9c9fa3;"></div>
<div style="left:1200px;top:158px;width:1px;height:199px;background:#9c9fa3;"></div>
<div style="left:631px;top:356px;width:570px;height:1px;background:#9c9fa3;"></div>
<div style="left:632px;top:159px;width:568px;height:1px;background:#a3a3a3;"></div>
<div style="left:632px;top:159px;width:1px;height:84px;background:#a3a3a3;"></div>
<div style="left:1199px;top:159px;width:1px;height:84px;background:#a3a3a3;"></div>
<div class="t g" style="left:679.8px;top:164px;transform:scaleX(0.8675);transform-origin:0 0;">Material code</div>
<div class="t g" style="left:811.5px;top:164px;transform:scaleX(0.8569);transform-origin:0 0;">Factory length (mm)</div>
<div class="t g" style="left:942.8px;top:164px;transform:scaleX(0.8656);transform-origin:0 0;">Type of material</div>
<div class="t g" style="left:1074.8px;top:164px;transform:scaleX(0.8562);transform-origin:0 0;">Description</div>
<div class="t g" style="left:646.2px;top:185px;transform:scaleX(0.8374);transform-origin:0 0;">1</div>
<div class="t g" style="left:676.3px;top:185px;transform:scaleX(0.8865);transform-origin:0 0;">W001</div>
<div class="t g" style="left:808.3px;top:185px;transform:scaleX(0.8838);transform-origin:0 0;">5800</div>
<div class="t g" style="left:939.0px;top:185px;transform:scaleX(0.9171);transform-origin:0 0;">Oak Wood</div>
<div class="t g" style="left:1071.0px;top:185px;transform:scaleX(0.9523);transform-origin:0 0;">4&quot; x 1&quot;</div>
<div class="t g" style="left:645.0px;top:206px;transform:scaleX(0.8374);transform-origin:0 0;">2</div>
<div class="t g" style="left:676.3px;top:206px;transform:scaleX(0.8812);transform-origin:0 0;">S015</div>
<div class="t g" style="left:808.3px;top:206px;transform:scaleX(0.8838);transform-origin:0 0;">5800</div>
<div class="t g" style="left:939.0px;top:206px;transform:scaleX(0.8334);transform-origin:0 0;">Steel</div>
<div class="t g" style="left:1071.0px;top:206px;transform:scaleX(0.9309);transform-origin:0 0;">Square tube 2&quot;x2&quot;x1/8&quot;</div>
<svg width="8" height="10" style="left:638.6px;top:208.2px"><path d="M0.2 0L5.5 4.55L0.2 9.1Z" fill="#333"/></svg>
<svg width="8" height="8" style="left:640.9px;top:231px"><path d="M3 0.6V5.2M1 1.7L5 4.1M5 1.7L1 4.1" stroke="#555" stroke-width="1.7" stroke-linecap="round"/></svg>
<div style="left:631px;top:397px;width:570px;height:306px;background:#b9d1ea;"></div>
<div style="left:633px;top:399px;width:566px;height:66px;background:#fff;"></div>
<div style="left:672px;top:399px;width:1px;height:20px;background:#b0b0b0;"></div>
<div style="left:804px;top:399px;width:1px;height:20px;background:#b0b0b0;"></div>
<div style="left:935px;top:399px;width:1px;height:20px;background:#b0b0b0;"></div>
<div style="left:1067px;top:399px;width:1px;height:20px;background:#b0b0b0;"></div>
<div style="left:672px;top:419px;width:1px;height:46px;background:#a3a3a3;"></div>
<div style="left:803px;top:419px;width:2px;height:46px;background:#a3a3a3;"></div>
<div style="left:934.5px;top:419px;width:2px;height:46px;background:#a3a3a3;"></div>
<div style="left:1066.5px;top:419px;width:2px;height:46px;background:#a3a3a3;"></div>
<div style="left:672px;top:418px;width:527px;height:1px;background:#a3a3a3;"></div>
<div style="left:633px;top:418px;width:39px;height:1px;background:#a3a3a3;"></div>
<div style="left:672px;top:441px;width:527px;height:1px;background:#a3a3a3;"></div>
<div style="left:633px;top:441px;width:39px;height:1px;background:#e4e4e4;"></div>
<div style="left:672px;top:464px;width:527px;height:1px;background:#a3a3a3;"></div>
<div style="left:633px;top:464px;width:39px;height:1px;background:#a3a3a3;"></div>
<div style="left:631px;top:397px;width:570px;height:1px;background:#9c9fa3;"></div>
<div style="left:631px;top:397px;width:1px;height:306px;background:#9c9fa3;"></div>
<div style="left:1200px;top:397px;width:1px;height:306px;background:#9c9fa3;"></div>
<div style="left:631px;top:702px;width:570px;height:1px;background:#9c9fa3;"></div>
<div style="left:632px;top:398px;width:568px;height:1px;background:#a3a3a3;"></div>
<div style="left:632px;top:398px;width:1px;height:67px;background:#a3a3a3;"></div>
<div style="left:1199px;top:398px;width:1px;height:67px;background:#a3a3a3;"></div>
<div class="t g" style="left:679.8px;top:403px;transform:scaleX(0.8525);transform-origin:0 0;">Bar quantity</div>
<div class="t g" style="left:811.5px;top:403px;transform:scaleX(0.8450);transform-origin:0 0;">Bar length (mm)</div>
<div class="t g" style="left:942.8px;top:403px;transform:scaleX(0.8675);transform-origin:0 0;">Material code</div>
<div class="t g" style="left:1074.8px;top:403px;transform:scaleX(0.8597);transform-origin:0 0;">Type of material</div>
<div class="t g" style="left:646.2px;top:424px;transform:scaleX(0.8374);transform-origin:0 0;">1</div>
<div class="t g" style="left:676.3px;top:425px;transform:scaleX(0.8374);transform-origin:0 0;">2</div>
<div class="t g" style="left:808.3px;top:425px;transform:scaleX(0.8838);transform-origin:0 0;">3100</div>
<div class="t g" style="left:1071.8px;top:425px;transform:scaleX(0.8334);transform-origin:0 0;">Steel</div>
<div style="left:937px;top:420px;width:129px;height:21px;background:#e1e1e1;border:1px solid #adadad;box-sizing:border-box;"></div>
<div style="left:1048px;top:421px;width:1px;height:19px;background:#c4c4c4;"></div>
<svg width="10" height="6" style="left:1052px;top:428.5px"><path d="M0.5 0.5L4.5 4.5L8.5 0.5" fill="none" stroke="#3a3a3a" stroke-width="1.2"/></svg>
<div class="t g" style="left:939.4px;top:425px;transform:scaleX(0.8812);transform-origin:0 0;">S015</div>
<div style="left:937px;top:443px;width:129px;height:21px;background:#e1e1e1;border:1px solid #adadad;box-sizing:border-box;"></div>
<div style="left:1048px;top:444px;width:1px;height:19px;background:#c4c4c4;"></div>
<svg width="10" height="6" style="left:1052px;top:451.5px"><path d="M0.5 0.5L4.5 4.5L8.5 0.5" fill="none" stroke="#3a3a3a" stroke-width="1.2"/></svg>
<svg width="14" height="10" style="left:638.3px;top:449.5px"><path d="M1 0.6L5.4 4.5L1 8.4Z" fill="#fff" stroke="#fff" stroke-width="1.6" opacity="0.75"/><circle cx="8.9" cy="4.7" r="3.3" fill="#fff" opacity="0.7"/><path d="M1 0.8L5.2 4.5L1 8.2Z" fill="#444"/><path d="M8.9 2.3V7.1M6.8 3.5L11 5.9M11 3.5L6.8 5.9" stroke="#4a4a4a" stroke-width="1.3"/></svg>
<div class="t u" style="left:21.6px;top:726px;letter-spacing:-0.300px;">Total pieces:</div>
<div class="t u" style="left:103.4px;top:726px;letter-spacing:-0.880px;">18</div>
<div style="left:166px;top:725px;width:100px;height:16px;background:#e6e6e6;border:1px solid #bcbcbc;box-sizing:border-box;"></div>
<div style="left:1212px;top:731px;width:2px;height:2px;background:#8e8e8e;"></div>
<div style="left:1208px;top:735px;width:2px;height:2px;background:#8e8e8e;"></div>
<div style="left:1212px;top:735px;width:2px;height:2px;background:#8e8e8e;"></div>
<div style="left:1204px;top:739px;width:2px;height:2px;background:#8e8e8e;"></div>
<div style="left:1208px;top:739px;width:2px;height:2px;background:#8e8e8e;"></div>
<div style="left:1212px;top:739px;width:2px;height:2px;background:#8e8e8e;"></div>
<svg width="1218" height="745" style="left:0;top:0"><path d="M175 490.3 L349.5 490.3 L1109 149.6" fill="none" stroke="#0624f6" stroke-width="3" stroke-linejoin="miter"/><polygon points="1151,129 1125.3,129 1127.1,134.5 1106,144.5 1110.5,154.7 1132.6,144.2 1134.7,149.6" fill="#0624f6"/></svg>
<div class="t b" style="left:187.2px;top:431px;transform:scaleX(0.9978);transform-origin:0 0;font-weight:bold;font-size:34.5px;line-height:40px;color:#0624f6;-webkit-text-stroke:0.5px #0624f6;">Step N°4:</div>
<div class="t b" style="left:61.3px;top:466px;transform:scaleX(0.9935);transform-origin:0 0;font-weight:bold;font-size:17.5px;line-height:20px;color:#0624f6;-webkit-text-stroke:0.25px #0624f6;">Finally, press the optimize button.</div>
</body></html>
